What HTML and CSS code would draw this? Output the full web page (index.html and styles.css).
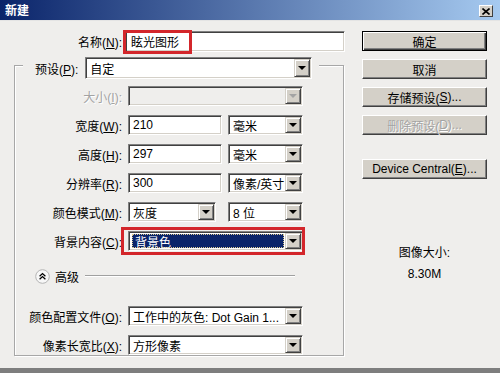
FILE: index.html
```html
<!DOCTYPE html>
<html lang="zh-CN">
<head>
    <meta charset="UTF-8">
    <title>新建</title>
    <link rel="stylesheet" href="styles.css">
</head>
<body>
    <div class="dialog">
        <div class="titlebar">
            <span class="title">新建</span>
            <span class="close">
                <svg width="8" height="7" viewBox="0 0 8 7"><path d="M0.5 0.5 L7.5 6.5 M7.5 0.5 L0.5 6.5" stroke="#000" stroke-width="1.6"/></svg>
            </span>
        </div>

        <div class="content">
            <div class="main">
                <div class="name-row">
                    <label class="lbl">名称(<u>N</u>):</label>
                    <div class="field name-field">
                        <span class="val">眩光图形</span>
                        <span class="mark name-mark"></span>
                    </div>
                </div>

                <div class="group">
                    <div class="legend">
                        <label class="lbl">预设(<u>P</u>):</label>
                        <div class="field select preset"><span class="val">自定</span><span class="arrow"></span></div>
                    </div>

                    <div class="rows">
                        <label class="lbl disabled">大小(<u>I</u>):</label>
                        <div class="field select span2 disabled"><span class="val"></span><span class="arrow"></span></div>

                        <label class="lbl">宽度(<u>W</u>):</label>
                        <div class="field"><span class="val">210</span></div>
                        <div class="field select"><span class="val">毫米</span><span class="arrow"></span></div>

                        <label class="lbl">高度(<u>H</u>):</label>
                        <div class="field"><span class="val">297</span></div>
                        <div class="field select"><span class="val">毫米</span><span class="arrow"></span></div>

                        <label class="lbl">分辨率(<u>R</u>):</label>
                        <div class="field"><span class="val">300</span></div>
                        <div class="field select"><span class="val">像素/英寸</span><span class="arrow"></span></div>

                        <label class="lbl">颜色模式(<u>M</u>):</label>
                        <div class="field select short"><span class="val">灰度</span><span class="arrow"></span></div>
                        <div class="field select"><span class="val">8 位</span><span class="arrow"></span></div>

                        <label class="lbl">背景内容(<u>C</u>):</label>
                        <div class="field select span2 focused"><span class="val"><span class="sel">背景色</span></span><span class="arrow"></span><span class="mark bg-mark"></span></div>

                        <div class="advanced">
                            <svg width="15" height="15" viewBox="0 0 15 15">
                                <circle cx="7.5" cy="7.5" r="6.8" fill="#f7f7f7" stroke="#b4b4b4"/>
                                <path d="M4.6 7.2 L7.5 4.6 L10.4 7.2 M4.6 10.2 L7.5 7.6 L10.4 10.2" fill="none" stroke="#000" stroke-width="1.3"/>
                            </svg>
                            <span class="adv-text">高级</span>
                            <span class="rule"></span>
                        </div>

                        <label class="lbl">颜色配置文件(<u>O</u>):</label>
                        <div class="field select span2"><span class="val">工作中的灰色: Dot Gain 1...</span><span class="arrow"></span></div>

                        <label class="lbl">像素长宽比(<u>X</u>):</label>
                        <div class="field select span2"><span class="val">方形像素</span><span class="arrow"></span></div>
                    </div>
                </div>
            </div>

            <div class="side">
                <div class="btn default">确定</div>
                <div class="btn">取消</div>
                <div class="btn">存储预设(<u>S</u>)...</div>
                <div class="btn disabled">删除预设(<u>D</u>)...</div>
                <div class="btn device">Device Central(<u>E</u>)...</div>
                <div class="size-info">
                    <div>图像大小:</div>
                    <div class="size-value">8.30M</div>
                </div>
            </div>
        </div>
    </div>
</body>
</html>
```

FILE: styles.css
```css
* {
    box-sizing: border-box;
}

body {
    margin: 0;
    font-family: "Liberation Sans", "Noto Sans CJK SC", sans-serif;
    font-size: 12px;
    color: #000;
}

.dialog {
    width: 500px;
    height: 373px;
    background: #efeeec;
    border-bottom: 5px solid #7e7e7e;
    display: flex;
    flex-direction: column;
    overflow: hidden;
}

/* title bar */
.titlebar {
    height: 21px;
    flex: none;
    display: flex;
    align-items: center;
    justify-content: space-between;
    padding: 2px 7px 0 5px;
    background: linear-gradient(to right, #0a246a, #a6caf0);
    border-bottom: 1px solid #e4e4e4;
}

.title {
    color: #fff;
    font-weight: bold;
    line-height: 14px;
}

.close {
    width: 14px;
    height: 12px;
    display: flex;
    align-items: center;
    justify-content: center;
    background: #d4d0c8;
    border: 1px solid;
    border-color: #fff #404040 #404040 #fff;
}

/* layout */
.content {
    display: flex;
    padding: 10px 0 0 14px;
}

.main {
    width: 331px;
}

.side {
    width: 125px;
    margin-left: 17px;
    display: flex;
    flex-direction: column;
    gap: 8px;
}

.lbl {
    text-align: right;
    white-space: nowrap;
}

.lbl.disabled {
    color: #a3a3a3;
    text-shadow: 1px 1px 0 #fff;
}

/* inputs */
.field {
    height: 20px;
    background: #fff;
    border: 1px solid;
    border-color: #808080 #fff #fff #808080;
    box-shadow: inset 1px 1px 0 #404040, inset -1px -1px 0 #d4d0c8;
    display: flex;
    align-items: center;
    padding: 1px;
    white-space: nowrap;
}

.field .val {
    flex: 1;
    padding-left: 3px;
    overflow: hidden;
    align-self: stretch;
    display: flex;
    align-items: center;
}

.select .arrow {
    width: 16px;
    align-self: stretch;
    flex: none;
    background: #d4d0c8;
    border: 1px solid;
    border-color: #d4d0c8 #404040 #404040 #d4d0c8;
    box-shadow: inset 1px 1px 0 #fff, inset -1px -1px 0 #808080;
    display: flex;
    align-items: center;
    justify-content: center;
}

.select .arrow::after {
    content: "";
    border-left: 4px solid transparent;
    border-right: 4px solid transparent;
    border-top: 4px solid #000;
}

.select.disabled {
    background: #efeeec;
}

.select.disabled .arrow::after {
    border-top-color: #a3a3a3;
}

.name-row {
    display: grid;
    grid-template-columns: 111px 220px;
    align-items: center;
}

.name-row .lbl {
    padding-right: 3px;
}

.name-field {
    height: 21px;
    position: relative;
}

.name-field .val {
    padding-left: 4px;
}

.mark {
    position: absolute;
    border: 3px solid #d3262b;
}

.name-mark {
    left: -3px;
    top: -2px;
    width: 69px;
    height: 24px;
}

/* group box */
.group {
    margin-top: 13px;
    width: 330px;
    height: 291px;
    border: 1px solid #a7a7a7;
    box-shadow: inset 1px 1px 0 #fff, 1px 1px 0 #fff;
    padding-left: 8px;
}

.legend {
    width: fit-content;
    height: 22px;
    margin-top: -9px;
    padding: 0 7px 0 12px;
    background: #efeeec;
    display: flex;
    align-items: center;
    gap: 7px;
}

.preset {
    width: 227px;
    height: 22px;
}

.rows {
    margin-top: 7px;
    display: grid;
    grid-template-columns: 99px 94px 75px;
    column-gap: 6px;
    row-gap: 9px;
    align-items: center;
}

.span2 {
    grid-column: span 2;
}

.short {
    width: 88px;
}

.focused {
    position: relative;
}

.focused .val {
    padding: 1px 1px 1px 2px;
}

.focused .sel {
    flex: 1;
    height: 100%;
    background: #0a246a;
    color: #fff;
    outline: 1px dotted #d8c890;
    outline-offset: -1px;
    display: flex;
    align-items: center;
    padding-left: 3px;
}

.bg-mark {
    left: -8px;
    top: -5px;
    right: -3px;
    bottom: -5px;
}

.advanced {
    grid-column: 1 / -1;
    margin: 8px 0 13px;
    height: 16px;
    padding-left: 12px;
    display: flex;
    align-items: center;
}

.adv-text {
    margin-left: 5px;
}

.rule {
    flex: 1;
    margin: 0 8px 0 6px;
    border-top: 1px solid #a0a0a0;
    border-bottom: 1px solid #fff;
}

/* buttons */
.btn {
    height: 20px;
    background: #d4d0c8;
    border: 1px solid;
    border-color: #fff #404040 #404040 #fff;
    box-shadow: inset -1px -1px 0 #808080;
    display: flex;
    align-items: center;
    justify-content: center;
    white-space: nowrap;
}

.btn.default {
    border: 1px solid #000;
    box-shadow: inset 1px 1px 0 #fff, inset -1px -1px 0 #404040, inset -2px -2px 0 #808080;
}

.btn.disabled {
    color: #a3a3a3;
    text-shadow: 1px 1px 0 #fff;
}

.btn.device {
    margin-top: 16px;
}

.size-info {
    margin-top: 57px;
    text-align: center;
    line-height: 18px;
}

.size-value {
    margin-top: 3px;
}
```
